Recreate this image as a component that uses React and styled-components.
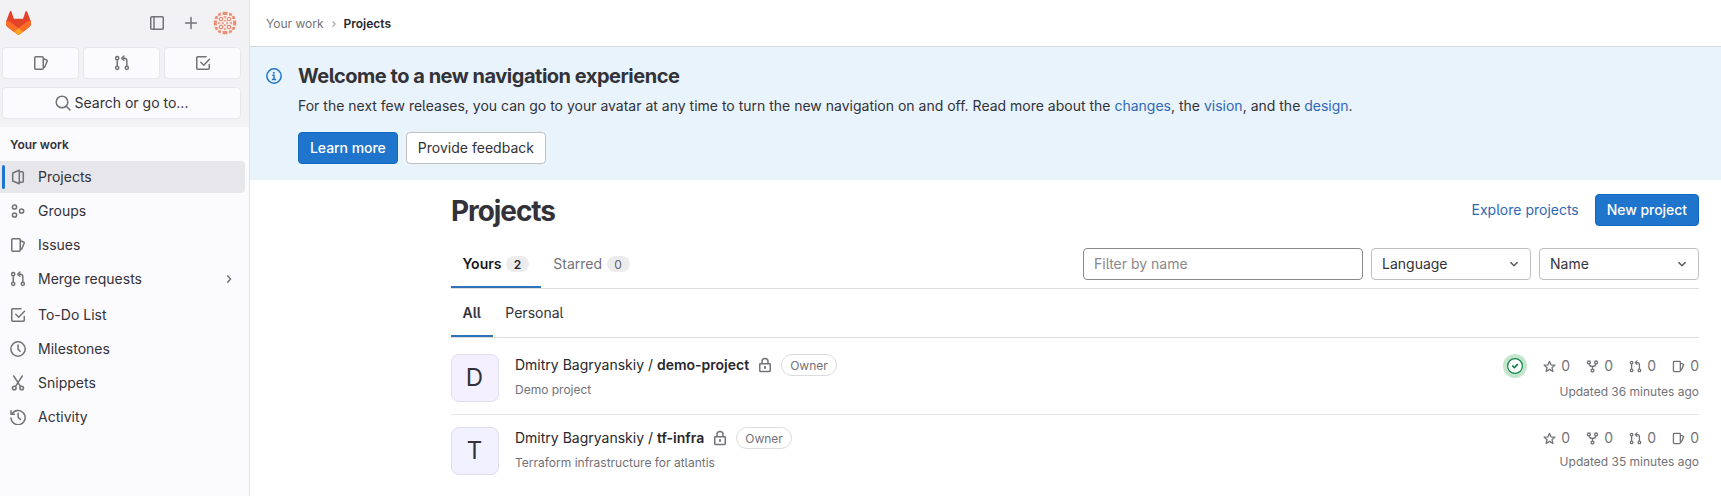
import React from 'react';
import styled, { createGlobalStyle, css } from 'styled-components';

const GlobalStyle = createGlobalStyle`
  *, *::before, *::after { box-sizing: border-box; }
  body {
    margin: 0;
    background: #fff;
    color: #333238;
    font-family: Inter, "Noto Sans", sans-serif;
    font-feature-settings: "cv05";
    font-size: 14px;
    line-height: 20px;
    overflow: hidden;
  }
  h1, h2, p { margin: 0; }
  a { color: #2f68b4; text-decoration: none; }
  button, input { font: inherit; font-feature-settings: inherit; color: inherit; }
`;

/* ---------- icons ---------- */

const Svg = styled.svg`
  display: block;
  flex: none;
  width: ${(p) => p.$size || 16}px;
  height: ${(p) => p.$size || 16}px;
  fill: none;
  stroke: currentColor;
  stroke-width: ${(p) => p.$stroke || 1.5};
`;

const shapes = {
  project: (
    <>
      <path d="M2.7 4 9.3 1.2v13.6L2.7 12z" strokeLinejoin="round" />
      <path d="M9.6 2.75h2.7a1 1 0 0 1 1 1v8.5a1 1 0 0 1-1 1H9.6" strokeLinejoin="round" />
    </>
  ),
  group: (
    <>
      <circle cx="4.5" cy="4" r="2.1" />
      <circle cx="4.5" cy="12" r="2.1" />
      <circle cx="11.6" cy="8" r="2.1" />
    </>
  ),
  issues: (
    <>
      <rect x="1.75" y="1.75" width="8.5" height="12.5" rx="1" />
      <path d="M10.5 3.7 14 5.3c.3.15.4.4.3.7L11.6 12.2" strokeLinecap="round" strokeLinejoin="round" />
    </>
  ),
  merge: (
    <>
      <circle cx="3.2" cy="3.2" r="1.6" />
      <circle cx="3.2" cy="12.8" r="1.6" />
      <circle cx="12.8" cy="12.8" r="1.6" />
      <path d="M3.2 4.8v6.4M12.8 11.2V5.6a2.4 2.4 0 0 0-2.4-2.4H8" />
      <path d="M9.9 1.1 7.7 3.2l2.2 2.1" strokeLinecap="round" strokeLinejoin="round" />
    </>
  ),
  todo: (
    <>
      <path d="M11 1.75H2.75a1 1 0 0 0-1 1v10.5a1 1 0 0 0 1 1h10.5a1 1 0 0 0 1-1V9.5" strokeLinecap="round" />
      <path d="m5.8 7.3 2.9 2.9 5.8-6" strokeLinecap="round" strokeLinejoin="round" />
    </>
  ),
  clock: (
    <>
      <circle cx="8" cy="8" r="7.2" />
      <path d="M8 4v4.1l2.1 2.1" strokeLinecap="round" strokeLinejoin="round" />
    </>
  ),
  snippet: (
    <>
      <circle cx="4.3" cy="13" r="1.8" />
      <circle cx="11.7" cy="13" r="1.8" />
      <path d="m3.7 1 6.9 10.6M12.3 1 5.4 11.6" strokeLinecap="round" />
    </>
  ),
  history: (
    <>
      <path d="M2 4.9A7.1 7.1 0 1 1 1 9" strokeLinecap="round" />
      <path d="M1 1.8v3.4h3.4M8.1 4.3v3.9l2.2 2.2" strokeLinecap="round" strokeLinejoin="round" />
    </>
  ),
  sidebar: (
    <>
      <rect x="1.75" y="1.75" width="12.5" height="12.5" rx="1" />
      <path d="M5 2v12" />
    </>
  ),
  plus: <path d="M8 2.6v10.8M2.6 8h10.8" strokeLinecap="round" />,
  search: (
    <>
      <circle cx="7" cy="7" r="5.8" />
      <path d="m11.3 11.3 3.6 3.6" strokeLinecap="round" />
    </>
  ),
  right: <path d="m6.6 4.8 3 3.2-3 3.2" strokeLinecap="round" strokeLinejoin="round" />,
  down: <path d="m4.9 6.6 3.1 3.1 3.1-3.1" strokeLinecap="round" strokeLinejoin="round" />,
  info: (
    <>
      <circle cx="8" cy="8" r="7.2" />
      <path d="M6.3 7.3H8v4M5.9 11.4h4.2" />
      <circle cx="7.8" cy="4.7" r="1" fill="currentColor" stroke="none" />
    </>
  ),
  lock: (
    <>
      <rect x="2.75" y="6.75" width="10.5" height="7.7" rx=".6" />
      <path d="M5 6.7V4.4a3 3 0 0 1 6 0v2.3" />
      <path d="M8 9.3v2.4" strokeWidth="2" />
    </>
  ),
  star: <path d="m8 1.6 1.8 4.3 4.9.4-3.7 3.1 1.2 4.7L8 11.6l-4.2 2.5L5 9.4 1.3 6.3l4.9-.4z" strokeLinejoin="round" />,
  fork: (
    <>
      <circle cx="3.6" cy="3" r="1.8" />
      <circle cx="12.4" cy="3" r="1.8" />
      <circle cx="8" cy="13" r="1.8" />
      <path d="M3.8 5c.4 2.4 1.9 2.9 4.2 2.9s3.8-.5 4.2-2.9M8 8v3.2" />
    </>
  ),
  passed: (
    <>
      <circle cx="8" cy="8" r="7.4" fill="#fff" strokeWidth="1.2" />
      <path d="m5.7 8 1.6 1.6 3-3" strokeLinecap="round" strokeLinejoin="round" strokeWidth="1.7" />
    </>
  ),
};

const Icon = ({ name, size, stroke }) => (
  <Svg viewBox="0 0 16 16" $size={size} $stroke={stroke} aria-hidden="true">
    {shapes[name]}
  </Svg>
);

const LogoSvg = styled.svg`
  display: block;
  width: 25px;
  height: 24px;
  margin-right: auto;
`;

const Logo = () => (
  <LogoSvg viewBox="0 0 25 24">
    <path fill="#E24329" d="m24.507 9.5-.034-.09L21.082.562a.896.896 0 0 0-1.694.091l-2.29 7.01H7.825L5.535.653a.898.898 0 0 0-1.694-.09L.451 9.411.416 9.5a6.297 6.297 0 0 0 2.09 7.278l.012.01.03.022 5.16 3.867 2.56 1.935 1.554 1.176a1.051 1.051 0 0 0 1.268 0l1.555-1.176 2.56-1.935 5.197-3.89.014-.01A6.297 6.297 0 0 0 24.507 9.5Z" />
    <path fill="#FC6D26" d="m24.507 9.5-.034-.09a11.44 11.44 0 0 0-4.56 2.051l-7.447 5.632 4.742 3.584 5.197-3.89.014-.01A6.297 6.297 0 0 0 24.507 9.5Z" />
    <path fill="#FCA326" d="m7.707 20.677 2.56 1.935 1.555 1.176a1.051 1.051 0 0 0 1.268 0l1.555-1.176 2.56-1.935-4.743-3.584-4.755 3.584Z" />
    <path fill="#FC6D26" d="M5.01 11.461a11.43 11.43 0 0 0-4.56-2.05L.416 9.5a6.297 6.297 0 0 0 2.09 7.278l.012.01.03.022 5.16 3.867 4.745-3.584-7.444-5.632Z" />
  </LogoSvg>
);

const IdenticonSvg = styled.svg`
  display: block;
  width: 24px;
  height: 24px;
  margin-left: -4px;
  border-radius: 50%;
`;

const Identicon = () => (
  <IdenticonSvg viewBox="0 0 24 24">
    <circle cx="12" cy="12" r="12" fill="#f7efef" />
    {[0, 90, 180, 270].map((angle) => (
      <g key={angle} transform={`rotate(${angle} 12 12)`} fill="#ea8f77">
        <path d="M9.6.8h4.8v3.1H9.6zM4.9 2.7l3-1.3v3.4H4.9zM16.1 1.4l3 1.3v2.1h-3z" />
        <path d="M10.4 5.2h3.2L12 7.6z" />
        <circle cx="8" cy="8" r="1.7" fill="#fff" stroke="#ea8f77" strokeWidth="1.3" />
        <path d="m12 8.6 1.4 1.4L12 11.4 10.6 10z" />
      </g>
    ))}
    <circle cx="12" cy="12" r="1.4" fill="#fff" />
  </IdenticonSvg>
);

/* ---------- sidebar ---------- */

const Layout = styled.div`
  display: flex;
  height: 496px;
`;

const Sidebar = styled.aside`
  flex: none;
  width: 250px;
  background: #fbfafd;
  border-right: 1px solid #e4e3e8;
`;

const UserBar = styled.div`
  height: 127px;
  padding: 10px 8px 0 2px;
  background: #f2f1f4;
`;

const BrandRow = styled.div`
  display: flex;
  align-items: center;
  height: 26px;
  padding: 0 4px;
  gap: 18px;
  color: #737278;
`;

const Shortcuts = styled.div`
  display: grid;
  grid-template-columns: repeat(3, 1fr);
  gap: 4px;
  margin-top: 11px;
`;

const barButton = css`
  display: flex;
  align-items: center;
  justify-content: center;
  height: 32px;
  padding: 0;
  border: 1px solid #e7e6ec;
  border-radius: 4px;
  background: #fbfafd;
`;

const ShortcutButton = styled.button`
  ${barButton}
  color: #737278;
`;

const SearchButton = styled.button`
  ${barButton}
  width: 100%;
  margin-top: 8px;
  gap: 4px;
  svg { color: #737278; }
`;

const NavTitle = styled.div`
  padding: 9px 10px 7px;
  font-size: 12px;
  font-weight: 600;
  line-height: 18px;
`;

const NavList = styled.nav`
  display: flex;
  flex-direction: column;
  gap: 2px;
  padding-right: 4px;
`;

const NavItem = styled.a`
  display: flex;
  align-items: center;
  height: 32px;
  padding-right: 8px;
  margin-top: ${(p) => (p.$spaced ? 2 : 0)}px;
  border-radius: 0 4px 4px 0;
  background: ${(p) => (p.$active ? '#e7e6eb' : 'transparent')};
  color: #333238;
  svg { color: #737278; }
`;

const ActiveMark = styled.span`
  width: 3px;
  height: 24px;
  margin: 0 5px 0 2px;
  border-radius: 2px;
  background: ${(p) => (p.$active ? '#1f75cb' : 'transparent')};
`;

const NavLabel = styled.span`
  flex: 1;
  margin-left: 12px;
`;

const navItems = [
  { icon: 'project', label: 'Projects', active: true },
  { icon: 'group', label: 'Groups' },
  { icon: 'issues', label: 'Issues' },
  { icon: 'merge', label: 'Merge requests', expandable: true },
  { icon: 'todo', label: 'To-Do List', spaced: true },
  { icon: 'clock', label: 'Milestones' },
  { icon: 'snippet', label: 'Snippets' },
  { icon: 'history', label: 'Activity' },
];

/* ---------- main area ---------- */

const Main = styled.main`
  flex: 1;
  min-width: 0;
`;

const TopBar = styled.header`
  display: flex;
  align-items: center;
  gap: 4px;
  height: 47px;
  padding: 1px 0 0 16px;
  border-bottom: 1px solid #d5d9de;
  color: #737278;
  font-size: 12px;
  svg { color: #a4a3a8; }
`;

const CurrentCrumb = styled.span`
  color: #28272d;
  font-weight: 600;
`;

const Banner = styled.section`
  display: flex;
  gap: 16px;
  height: 133px;
  padding: 16px 16px 0;
  background: #e8f3fc;
`;

const BannerIcon = styled.div`
  padding-top: 5px;
  color: #1f75cb;
`;

const BannerTitle = styled.h2`
  font-size: 20px;
  font-weight: 700;
  line-height: 26px;
  letter-spacing: -0.48px;
`;

const BannerText = styled.p`
  margin-top: 7px;
`;

const Actions = styled.div`
  display: flex;
  align-items: center;
  gap: ${(p) => p.$gap || 8}px;
`;

const BannerActions = styled(Actions)`
  margin-top: 16px;
`;

const Button = styled.button`
  height: 32px;
  padding: 0 11px;
  border: 1px solid ${(p) => (p.$primary ? '#1068bf' : '#bfbfc3')};
  border-radius: 4px;
  background: ${(p) => (p.$primary ? '#1f75cb' : '#fff')};
  color: ${(p) => (p.$primary ? '#fff' : '#333238')};
  font-weight: ${(p) => (p.$primary ? 500 : 400)};
  letter-spacing: ${(p) => (p.$primary ? -0.05 : 0.02)}px;
`;

const Page = styled.section`
  width: 1248px;
  margin-left: 201px;
`;

const PageHeader = styled.div`
  display: flex;
  align-items: center;
  justify-content: space-between;
  height: 32px;
  margin-top: 14px;
`;

const PageTitle = styled.h1`
  padding-top: 2px;
  font-size: 28px;
  font-weight: 700;
  line-height: 32px;
  letter-spacing: -1.08px;
`;

const TabBar = styled.div`
  display: flex;
  align-items: flex-start;
  height: ${(p) => p.$height}px;
  margin-top: ${(p) => p.$top || 0}px;
  border-bottom: 1px solid #dcdcde;
`;

const Tab = styled.a`
  display: flex;
  align-items: center;
  gap: 4.5px;
  align-self: stretch;
  padding: 0 12px ${(p) => p.$lift}px ${(p) => (p.$active ? 11.5 : 12.3)}px;
  color: ${(p) => p.$color};
  font-weight: ${(p) => (p.$active ? 600 : 400)};
  box-shadow: ${(p) => (p.$active ? 'inset 0 -2px 0 #2f72b8' : 'none')};
`;

const Count = styled.span`
  min-width: 23px;
  height: 16px;
  border-radius: 8px;
  background: #ececef;
  color: ${(p) => (p.$active ? '#28272d' : '#626168')};
  font-size: 12px;
  line-height: 17px;
  text-align: center;
`;

const Filters = styled.div`
  display: flex;
  gap: 8px;
  margin-left: auto;
`;

const FilterInput = styled.input`
  width: 280px;
  height: 32px;
  padding: 0 10px 1px;
  border: 1px solid #89888d;
  border-radius: 4px;
  background: #fff;
  outline: 0;
  &::placeholder { color: #89888d; opacity: 1; }
`;

const Dropdown = styled.button`
  display: flex;
  align-items: center;
  justify-content: space-between;
  width: 160px;
  height: 32px;
  padding: 0 8px 0 10px;
  border: 1px solid #bfbfc3;
  border-radius: 4px;
  background: #fff;
  svg { color: #626168; }
`;

const ProjectRow = styled.article`
  display: flex;
  height: ${(p) => p.$height}px;
  padding-top: ${(p) => p.$top}px;
  border-bottom: 1px solid ${(p) => (p.$last ? 'transparent' : '#e6e5e9')};
`;

const Avatar = styled.div`
  flex: none;
  width: 48px;
  height: 48px;
  margin-right: 16px;
  padding-right: 1px;
  border: 1px solid #e1ddec;
  border-radius: 8px;
  background: ${(p) => p.$tint};
  font-size: 24px;
  line-height: 46px;
  text-align: center;
`;

const Details = styled.div`
  flex: 1;
`;

const NameLine = styled.div`
  display: flex;
  align-items: center;
  height: 22px;
  color: #28272d;
  svg { margin-left: 8px; color: #737278; }
`;

const ProjectName = styled.b`
  font-weight: 600;
`;

const Role = styled.span`
  height: 22px;
  margin-left: 8px;
  padding: 0 8px;
  border: 1px solid #dcdcde;
  border-radius: 11px;
  color: #737278;
  font-size: 12px;
  line-height: 21px;
`;

const Description = styled.p`
  margin-top: 4px;
  color: #737278;
  font-size: 12px;
`;

const Meta = styled.div`
  color: #737278;
`;

const Stats = styled.div`
  display: flex;
  align-items: center;
  justify-content: flex-end;
  gap: 16px;
  height: ${(p) => p.$height}px;
`;

const Stat = styled.span`
  display: flex;
  align-items: center;
  justify-content: space-between;
  width: 27px;
`;

const Pipeline = styled.span`
  display: grid;
  place-items: center;
  width: 24px;
  height: 24px;
  border-radius: 50%;
  background: #c3e6cd;
  color: #108548;
`;

const Updated = styled.div`
  margin-top: ${(p) => p.$top}px;
  font-size: 12px;
  text-align: right;
`;

const projects = [
  { letter: 'D', tint: '#f4f0ff', name: 'demo-project', description: 'Demo project', updated: 'Updated 36 minutes ago', passed: true, height: 77, top: 16 },
  { letter: 'T', tint: '#f1f1ff', name: 'tf-infra', description: 'Terraform infrastructure for atlantis', updated: 'Updated 35 minutes ago', height: 72, top: 12 },
];

export default function App() {
  return (
    <Layout>
      <GlobalStyle />
      <Sidebar>
        <UserBar>
          <BrandRow>
            <Logo />
            <Icon name="sidebar" />
            <Icon name="plus" />
            <Identicon />
          </BrandRow>
          <Shortcuts>
            <ShortcutButton aria-label="Issues"><Icon name="issues" /></ShortcutButton>
            <ShortcutButton aria-label="Merge requests"><Icon name="merge" /></ShortcutButton>
            <ShortcutButton aria-label="To-Do List"><Icon name="todo" /></ShortcutButton>
          </Shortcuts>
          <SearchButton><Icon name="search" />Search or go to...</SearchButton>
        </UserBar>
        <NavTitle>Your work</NavTitle>
        <NavList>
          {navItems.map((item) => (
            <NavItem key={item.label} $active={item.active} $spaced={item.spaced}>
              <ActiveMark $active={item.active} />
              <Icon name={item.icon} />
              <NavLabel>{item.label}</NavLabel>
              {item.expandable && <Icon name="right" />}
            </NavItem>
          ))}
        </NavList>
      </Sidebar>
      <Main>
        <TopBar>
          <span>Your work</span>
          <Icon name="right" size={12} />
          <CurrentCrumb>Projects</CurrentCrumb>
        </TopBar>
        <Banner>
          <BannerIcon><Icon name="info" /></BannerIcon>
          <div>
            <BannerTitle>Welcome to a new navigation experience</BannerTitle>
            <BannerText>
              For the next few releases, you can go to your avatar at any time to turn the new navigation on and off. Read more about the <a>changes</a>, the <a>vision</a>, and the <a>design</a>.
            </BannerText>
            <BannerActions>
              <Button $primary>Learn more</Button>
              <Button>Provide feedback</Button>
            </BannerActions>
          </div>
        </Banner>
        <Page>
          <PageHeader>
            <PageTitle>Projects</PageTitle>
            <Actions $gap={16}>
              <a>Explore projects</a>
              <Button $primary>New project</Button>
            </Actions>
          </PageHeader>
          <TabBar $height={41} $top={22}>
            <Tab $active $lift={8} $color="#18171d">Yours <Count $active>2</Count></Tab>
            <Tab $lift={8} $color="#737278">Starred <Count>0</Count></Tab>
            <Filters>
              <FilterInput placeholder="Filter by name" />
              <Dropdown>Language<Icon name="down" /></Dropdown>
              <Dropdown>Name<Icon name="down" /></Dropdown>
            </Filters>
          </TabBar>
          <TabBar $height={49}>
            <Tab $active $lift={0} $color="#333238">All</Tab>
            <Tab $lift={0} $color="#333238">Personal</Tab>
          </TabBar>
          {projects.map((p, i) => (
            <ProjectRow key={p.name} $height={p.height} $top={p.top} $last={i === projects.length - 1}>
              <Avatar $tint={p.tint}>{p.letter}</Avatar>
              <Details>
                <NameLine>
                  <span>Dmitry Bagryanskiy / <ProjectName>{p.name}</ProjectName></span>
                  <Icon name="lock" />
                  <Role>Owner</Role>
                </NameLine>
                <Description>{p.description}</Description>
              </Details>
              <Meta>
                <Stats $height={p.passed ? 24 : 22}>
                  {p.passed && <Pipeline><Icon name="passed" /></Pipeline>}
                  {['star', 'fork', 'merge', 'issues'].map((name) => (
                    <Stat key={name}><Icon name={name} size={13} stroke={1.6} />0</Stat>
                  ))}
                </Stats>
                <Updated $top={p.passed ? 4 : 3}>{p.updated}</Updated>
              </Meta>
            </ProjectRow>
          ))}
        </Page>
      </Main>
    </Layout>
  );
}
